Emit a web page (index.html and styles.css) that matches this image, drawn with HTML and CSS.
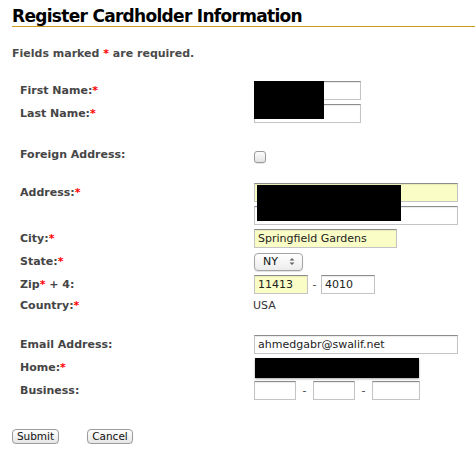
FILE: index.html
```html
<!DOCTYPE html>
<html lang="en">
<head>
	<meta charset="UTF-8">
	<title>Register Cardholder Information</title>
	<link rel="stylesheet" href="styles.css">
</head>
<body>
<h1 class="title">Register Cardholder Information</h1>
<p class="note">Fields marked <span class="req">*</span> are required.</p>

<form class="card-form">
    <div class="group">
        <div class="row">
            <label class="lbl">First Name:<span class="req">*</span></label>
            <div class="field"><input type="text" class="txt w-name"></div>
        </div>
        <div class="row">
            <label class="lbl">Last Name:<span class="req">*</span></label>
            <div class="field"><input type="text" class="txt w-name"></div>
        </div>
        <span class="redact r-name"></span>
    </div>

    <div class="group g-foreign">
        <div class="row">
            <label class="lbl lbl-up">Foreign Address:</label>
            <div class="field"><input type="checkbox" class="chk"></div>
        </div>
    </div>

    <div class="group g-address">
        <div class="row">
            <label class="lbl">Address:<span class="req">*</span></label>
            <div class="field"><input type="text" class="txt w-wide filled"></div>
        </div>
        <div class="row">
            <span class="lbl"></span>
            <div class="field"><input type="text" class="txt w-wide"></div>
        </div>
        <span class="redact r-address"></span>
        <div class="row">
            <label class="lbl">City:<span class="req">*</span></label>
            <div class="field"><input type="text" class="txt w-city filled" value="Springfield Gardens"></div>
        </div>
        <div class="row">
            <label class="lbl">State:<span class="req">*</span></label>
            <div class="field">
                <span class="sel">
                    NY
                    <svg class="sel-arrows" width="6" height="9" viewBox="0 0 6 9">
                        <path d="M0.5 3.5 L3 1 L5.5 3.5 Z M0.5 5.5 L3 8 L5.5 5.5 Z" fill="#666"/>
                    </svg>
                </span>
            </div>
        </div>
        <div class="row">
            <label class="lbl">Zip<span class="req">*</span> + 4:</label>
            <div class="field">
                <input type="text" class="txt w-zip filled" value="11413">
                <span class="dash">-</span>
                <input type="text" class="txt w-zip" value="4010">
            </div>
        </div>
        <div class="row row-short">
            <label class="lbl">Country:<span class="req">*</span></label>
            <div class="field plain">USA</div>
        </div>
    </div>

    <div class="group g-contact">
        <div class="row">
            <label class="lbl">Email Address:</label>
            <div class="field"><input type="text" class="txt w-wide" value="ahmedgabr@swalif.net"></div>
        </div>
        <div class="row">
            <label class="lbl">Home:<span class="req">*</span></label>
            <div class="field"><span class="redact-box"></span></div>
        </div>
        <div class="row">
            <label class="lbl">Business:</label>
            <div class="field">
                <input type="text" class="txt w-ph">
                <span class="dash dash-ph">-</span>
                <input type="text" class="txt w-ph">
                <span class="dash dash-ph">-</span>
                <input type="text" class="txt w-ph2">
            </div>
        </div>
    </div>

    <div class="buttons">
        <button type="button" class="btn btn-submit">Submit</button>
        <button type="button" class="btn btn-cancel">Cancel</button>
    </div>
</form>
</body>
</html>
```

FILE: styles.css
```css
*
{
    margin: 0;
    padding: 0;
    box-sizing: border-box;
}
body
{
    width: 475px;
    font-family: "DejaVu Sans", Verdana, sans-serif;
    color: #444;
    background: #fff;
}
.title
{
    margin-left: 12px;
    padding-top: 6px;
    font-size: 17px;
    line-height: 20px;
    letter-spacing: -0.7px;
    font-weight: bold;
    color: #000;
    border-bottom: 1px solid #cc9a1e;
}
.note
{
    margin: 20px 0 0 12px;
    font-size: 11px;
    line-height: 14px;
    font-weight: bold;
    color: #4a4a4a;
}
.req
{
    color: #f00;
}
.card-form
{
    margin-top: 18px;
}
.group
{
    position: relative;
}
.g-foreign
{
    margin-top: 20px;
}
.g-address
{
    margin-top: 13px;
}
.g-contact
{
    margin-top: 19px;
}
.row
{
    display: grid;
    grid-template-columns: 234px auto;
    align-items: center;
    height: 23px;
    padding-left: 20px;
}
.row-short
{
    height: 18px;
}
.lbl
{
    font-size: 11px;
    font-weight: bold;
    color: #454545;
}
.lbl-up
{
    margin-bottom: 5px;
}
.field
{
    display: flex;
    align-items: center;
}
.plain
{
    margin-left: -1px;
    font-size: 11px;
    color: #333;
}
.txt
{
    height: 19px;
    padding: 0 3px;
    font-family: "DejaVu Sans", sans-serif;
    font-size: 11px;
    color: #222;
    background: #fff;
    border: 1px solid #c4c4c4;
    border-top-color: #8c8c8c;
    box-shadow: inset 0 1px 1px rgba(0,0,0,.08);
    outline: none;
}
.filled
{
    background: #fbfdc6;
}
.w-name { width: 107px; }
.w-wide { width: 204px; }
.w-city { width: 143px; }
.w-zip { width: 54px; }
.w-ph { width: 42px; }
.w-ph2 { width: 48px; }
.dash
{
    width: 13px;
    text-align: center;
    font-size: 11px;
    color: #444;
}
.dash-ph
{
    width: 17px;
}
.chk
{
    appearance: none;
    -webkit-appearance: none;
    width: 12px;
    height: 12px;
    border: 1px solid #9a9a9a;
    border-radius: 3px;
    background: linear-gradient(#fdfdfd, #e4e4e4);
    box-shadow: 0 1px 1px rgba(0,0,0,.1);
}
.sel
{
    display: flex;
    align-items: center;
    justify-content: space-between;
    width: 49px;
    height: 18px;
    padding: 0 7px 0 8px;
    font-size: 11px;
    color: #111;
    border: 1px solid #a4a4a4;
    border-radius: 4px;
    background: linear-gradient(#ffffff, #ececec);
    box-shadow: 0 1px 1px rgba(0,0,0,.12);
}
.redact
{
    position: absolute;
    background: #000;
}
.r-name
{
    left: 254px;
    top: 2px;
    width: 70px;
    height: 38px;
}
.r-address
{
    left: 257px;
    top: 4px;
    width: 144px;
    height: 36px;
}
.redact-box
{
    display: block;
    width: 164px;
    height: 20px;
    margin-left: 1px;
    background: #000;
    box-shadow: 0 1px 2px rgba(0,0,0,.35);
}
.buttons
{
    display: flex;
    gap: 28px;
    margin-top: 27px;
    padding-left: 12px;
}
.btn
{
    height: 15px;
    font-family: "DejaVu Sans", sans-serif;
    font-size: 10.5px;
    line-height: 13px;
    color: #111;
    border: 1px solid #9c9c9c;
    border-radius: 4px;
    background: linear-gradient(#ffffff, #e6e6e6);
    box-shadow: 0 1px 1px rgba(0,0,0,.12);
}
.btn-submit { width: 47px; }
.btn-cancel { width: 46px; }
```
